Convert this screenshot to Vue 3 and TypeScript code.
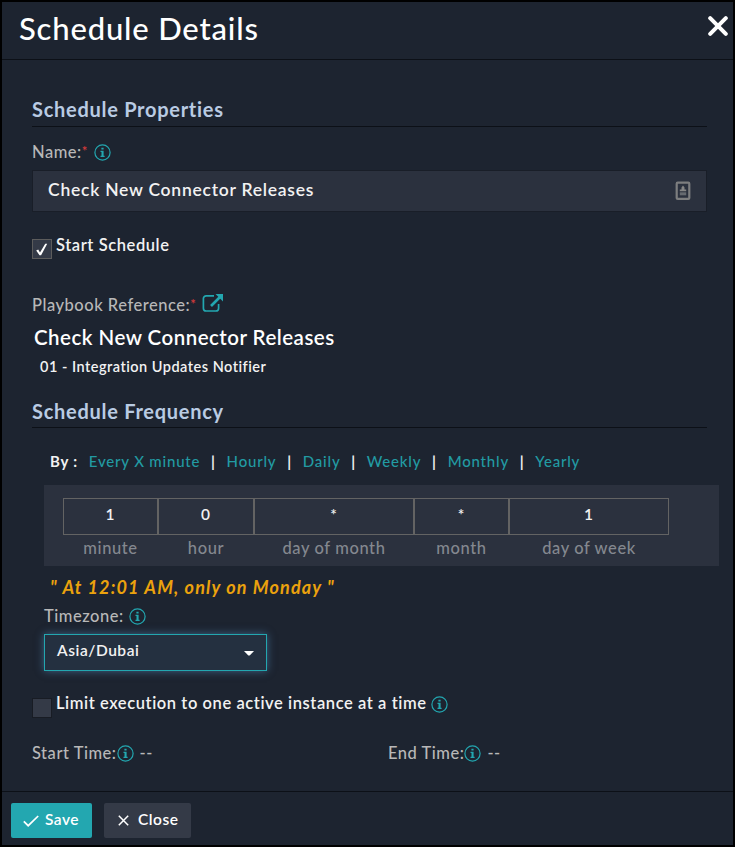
<script setup lang="ts">
import { ref, h } from 'vue'

const InfoIcon = () =>
  h('svg', { class: 'info', viewBox: '0 0 17 17', width: 17, height: 17 }, [
    h('circle', { cx: 8.5, cy: 8.5, r: 7.6, fill: 'none', stroke: '#23a7b0', 'stroke-width': 1.2 }),
    h('path', {
      d: 'M7.4 3.7h2.200v1.900H7.400zM6.500 6.800h3.100v4.900h1v1.200H6.500v-1.200h1V8h-1z',
      fill: '#23a7b0',
    }),
  ])

const name = ref('Check New Connector Releases')
const presets = ['Every X minute', 'Hourly', 'Daily', 'Weekly', 'Monthly', 'Yearly']
const cron = [
  { value: '1', label: 'minute' },
  { value: '0', label: 'hour' },
  { value: '*', label: 'day of month' },
  { value: '*', label: 'month' },
  { value: '1', label: 'day of week' },
]
</script>

<template>
  <div class="dialog">
    <header class="header">
      <h1>Schedule Details</h1>
      <svg class="dismiss" viewBox="0 0 20 20" width="20" height="20">
        <path d="M2.200 2.200l15.600 15.600M17.800 2.200L2.200 17.800" stroke="#fff" stroke-width="4" stroke-linecap="round" />
      </svg>
    </header>

    <main class="body">
      <h2 class="section">Schedule Properties</h2>
      <div class="label name-label">
        <span>Name:</span><i class="req">*</i><InfoIcon />
      </div>
      <div class="name-box">
        <span>{{ name }}</span>
        <svg viewBox="0 0 16 20" width="16" height="20">
          <rect x="1.700" y="1.700" width="12.600" height="16.200" rx="1" fill="none" stroke="#7d7e7f" stroke-width="2.200" />
          <path d="M8 4.500l1.500 2v2h1.700v1.700H4.800V8.500h1.700v-2z" fill="#858585" />
          <rect x="4.800" y="11.300" width="6.400" height="3" fill="#666a70" />
        </svg>
      </div>
      <div class="check-row start">
        <span class="box checked">
          <svg viewBox="0 0 18 18" width="18" height="18">
            <path d="M3.200 10.500l2-1 1.800 2.900L12.200 3.700h2L8.100 15.200H6.500z" fill="#fff" />
          </svg>
        </span>
        <span class="check-text">Start Schedule</span>
      </div>

      <div class="label ref-label">
        <span>Playbook Reference:</span><i class="req">*</i>
        <svg class="ext" viewBox="0 0 22 20" width="22" height="20">
          <path d="M12 2.800H4.200A2.800 2.800 0 0 0 1.400 5.600v9.600A2.800 2.800 0 0 0 4.200 18h9.600a2.800 2.800 0 0 0 2.800-2.800V11" fill="none" stroke="#23a7b0" stroke-width="1.700" />
          <path d="M9 13L18 4" stroke="#23a7b0" stroke-width="2.600" />
          <path d="M13.500 1H21v7.500z" fill="#23a7b0" />
        </svg>
      </div>
      <div class="playbook">Check New Connector Releases</div>
      <div class="collection">01 - Integration Updates Notifier</div>

      <h2 class="section second">Schedule Frequency</h2>
      <nav class="presets">
        <b>By :</b>
        <template v-for="(p, i) in presets" :key="p">
          <em v-if="i > 0">|</em>
          <a>{{ p }}</a>
        </template>
      </nav>
      <div class="cron">
        <div v-for="c in cron" :key="c.label" class="cell">
          <div class="value">{{ c.value }}</div>
          <div class="unit">{{ c.label }}</div>
        </div>
      </div>
      <div class="summary">" At 12:01 AM, only on Monday "</div>
      <div class="label tz-label"><span>Timezone:</span><InfoIcon /></div>
      <div class="select">
        <span>Asia/Dubai</span>
        <svg viewBox="0 0 10 5" width="10" height="5"><path d="M0 0h10L6.200 4q-1.200 1-2.400 0z" fill="#fff" /></svg>
      </div>
      <div class="check-row limit">
        <span class="box"></span>
        <span class="check-text">Limit execution to one active instance at a time</span>
        <InfoIcon />
      </div>
      <div class="times">
        <div class="label"><span>Start Time:</span><InfoIcon /><span class="dash">--</span></div>
        <div class="label"><span>End Time:</span><InfoIcon /><span class="dash">--</span></div>
      </div>
    </main>

    <footer class="footer">
      <button class="btn save">
        <svg viewBox="0 0 16 12" width="16" height="12"><path d="M.8 6.300l4.400 4.400L15.200 1" fill="none" stroke="#fff" stroke-width="1.700" /></svg>
        <span>Save</span>
      </button>
      <button class="btn close">
        <svg viewBox="0 0 11 11" width="11" height="11"><path d="M.8.8l9.400 9.400M10.200.8L.8 10.200" stroke="#fff" stroke-width="1.500" /></svg>
        <span>Close</span>
      </button>
    </footer>
  </div>
</template>

<style>
body {
  margin: 0;
  background: #000;
}
</style>

<style scoped>
.dialog {
  box-sizing: border-box;
  width: 735px;
  height: 847px;
  border: 2px solid #000;
  background: #1d2430;
  color: #f2f2f2;
  font-family: Lato, 'Liberation Sans', sans-serif;
  font-size: 16px;
  font-weight: 600;
  line-height: 20px;
  letter-spacing: 0.8px;
  display: flex;
  flex-direction: column;
  white-space: nowrap;
}
.header {
  height: 57px;
  border-bottom: 1px solid #0c1017;
  display: flex;
  justify-content: space-between;
  padding: 0 5px 0 17px;
}
h1 {
  margin: 8px 0 0;
  font-size: 31px;
  line-height: 36px;
  font-weight: 500;
  letter-spacing: 0.82px;
  color: #fff;
}
.dismiss {
  margin-top: 14px;
}
.body {
  height: 731px;
  padding: 0 0 0 30px;
  display: flex;
  flex-direction: column;
}
.section {
  box-sizing: border-box;
  width: 675px;
  height: 31px;
  margin: 36px 0 0;
  border-bottom: 1px solid #0c1017;
  font-size: 20px;
  line-height: 26px;
  font-weight: 700;
  letter-spacing: 0.72px;
  color: #b9cbe3;
}
.section.second {
  height: 30px;
  margin-top: 21px;
}
.label {
  display: flex;
  height: 20px;
  font-size: 16.5px;
  font-weight: 500;
  letter-spacing: 0.52px;
  color: #b8b8b8;
}
.info {
  flex: none;
  width: 17px;
  height: 17px;
  margin-top: 2px;
}
.req {
  font-style: normal;
  color: #e03c3c;
  font-size: 13px;
  line-height: 18px;
  width: 6px;
}
.name-label {
  margin-top: 15px;
}
.name-label .info {
  margin-left: 6px;
}
.name-box {
  box-sizing: border-box;
  width: 675px;
  height: 42px;
  margin-top: 8px;
  padding: 0 15px 0 15px;
  background: #2b313e;
  border: 1px solid #191e28;
  font-size: 17.5px;
  letter-spacing: 0.75px;
  display: flex;
  justify-content: space-between;
  align-items: center;
}
.name-box span {
  height: 23px;
}
.check-row {
  display: flex;
  height: 21px;
}
.start {
  margin-top: 27px;
}
.box {
  box-sizing: border-box;
  width: 20px;
  height: 20px;
  background: #343a47;
  border: 1px solid #181c24;
}
.checked {
  border-color: #5c5c5c;
}
.box svg {
  display: block;
}
.check-text {
  margin: -4px 0 0 4px;
  font-size: 16.5px;
  letter-spacing: 0.58px;
}
.ref-label {
  margin-top: 35px;
}
.ext {
  margin: -2px 0 0 6px;
}
.playbook {
  margin: 9px 0 0 2px;
  font-size: 20.5px;
  line-height: 26px;
  letter-spacing: 0.48px;
  color: #fff;
}
.collection {
  margin: 7px 0 0 8px;
  font-size: 14.5px;
  letter-spacing: 0.49px;
}
.presets {
  display: flex;
  margin: 23px 0 0 18px;
  gap: 10.8px;
  font-size: 15px;
}
.presets b {
  width: 28px;
  font-weight: 700;
}
.presets em {
  font-style: normal;
  font-weight: 700;
}
.presets a {
  font-weight: 500;
  color: #229ba3;
}
.cron {
  box-sizing: border-box;
  width: 675px;
  height: 81px;
  margin: 14px 0 0 12px;
  padding: 13px 50px 0 19px;
  background: #2b313e;
  display: grid;
  grid-template-columns: 95px 96px 160px 95px 160px;
  text-align: center;
}
.value {
  box-sizing: border-box;
  height: 37px;
  border: 1px solid #636363;
  font-size: 15.5px;
  line-height: 31px;
}
.unit {
  margin-top: 3px;
  font-size: 16.5px;
  font-weight: 500;
  letter-spacing: 0.6px;
  color: #84888f;
}
.summary {
  margin: 9px 0 0 18px;
  height: 24px;
  line-height: 24px;
  font-size: 18px;
  font-style: italic;
  font-weight: 700;
  letter-spacing: 1.15px;
  color: #eba20d;
}
.tz-label {
  margin: 7px 0 0 12px;
}
.tz-label .info {
  margin-left: 5px;
}
.select {
  box-sizing: border-box;
  width: 223px;
  height: 37px;
  margin: 8px 0 0 12px;
  padding: 0 12px 0 12px;
  border: 1px solid #23a7b0;
  background: #243040;
  box-shadow: 0 0 8px rgba(82, 140, 190, 0.6);
  font-size: 15.5px;
  letter-spacing: 0.55px;
  display: flex;
  justify-content: space-between;
  align-items: center;
}
.select span {
  height: 25px;
}
.select svg {
  margin-top: 1px;
}
.limit {
  margin-top: 27px;
}
.limit .check-text {
  margin-top: -5px;
}
.limit .info {
  margin: -2px 0 0 4px;
}
.times {
  display: grid;
  grid-template-columns: 356px 1fr;
  margin-top: 24px;
}
.dash {
  margin-left: 6px;
}
.footer {
  border-top: 1px solid #0c1017;
  padding: 11px 0 0 9px;
  display: flex;
  gap: 12px;
}
.btn {
  box-sizing: border-box;
  height: 35px;
  border: 0;
  border-radius: 2px;
  padding: 0;
  display: flex;
  align-items: center;
  font: 600 15.500px/20px Lato, sans-serif;
  letter-spacing: 0.5px;
  color: #fff;
}
.save {
  width: 81px;
  padding-left: 12px;
  gap: 6px;
  background: #23a7b0;
}
.close {
  width: 87px;
  padding-left: 14px;
  gap: 9px;
  background: #343a47;
}
.btn span {
  height: 23px;
}
</style>
